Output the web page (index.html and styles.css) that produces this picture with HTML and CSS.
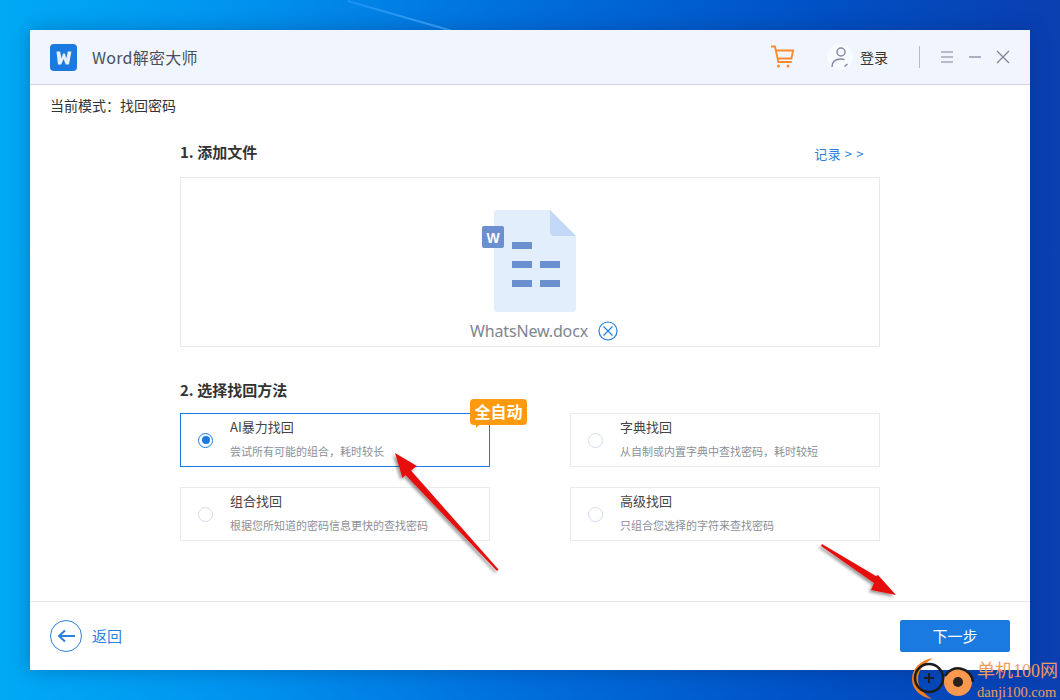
FILE: index.html
```html
<!DOCTYPE html>
<html lang="zh">
<head>
<meta charset="utf-8">
<title>Word解密大师</title>
<link rel="stylesheet" href="styles.css">
</head>
<body>
<div class="streak"></div>
<main class="window">
  <header class="titlebar">
    <svg class="logo" width="27" height="27" viewBox="0 0 27 27"><rect width="27" height="27" rx="4" fill="#1a7ae0"/><path d="M6.500 7.500h3.600l1.500 7 1.400-5h1.900l1.400 5 1.500-7h3.600L19 20.500h-3.300l-2.200-5.500-2.200 5.500H8z" fill="#e6f0fb"/></svg>
    <span class="appname">Word解密大师</span>
    <span class="spacer"></span>
    <svg class="cart" width="24" height="24" viewBox="0 0 24 24" fill="none" stroke="#ff8a2b" stroke-width="1.800"><path d="M1 1.500h4l3.300 15.500h13.500"/><path d="M5.800 5.500H23l-1.500 8H7.500"/><circle cx="8.500" cy="21" r="1.500" fill="#ff8a2b" stroke="none"/><circle cx="18" cy="21" r="1.500" fill="#ff8a2b" stroke="none"/></svg>
    <span class="avatar">
      <svg width="26" height="26" viewBox="0 0 26 26" fill="none" stroke="#858a9e" stroke-width="1.500"><circle cx="14" cy="8" r="4"/><path d="M5 23c0-5 3-8 9-8 1.500 0 2.500.2 3.500.6"/><path d="M17.500 22.500l3-2.500" /></svg>
    </span>
    <span class="login">登录</span>
    <span class="divider"></span>
    <svg class="winbtn first" width="14" height="14" viewBox="0 0 14 14" stroke="#7d8296" stroke-width="1.200"><path d="M1 2h12M1 7h12M1 12h12"/></svg>
    <svg class="winbtn" width="14" height="14" viewBox="0 0 14 14" stroke="#7d8296" stroke-width="1.200"><path d="M1 7h12"/></svg>
    <svg class="winbtn" width="14" height="14" viewBox="0 0 14 14" stroke="#7d8296" stroke-width="1.200"><path d="M1 1l12 12M13 1L1 13"/></svg>
  </header>

  <div class="mode">当前模式：找回密码</div>

  <section class="content">
    <div class="sec-head">
      <h2 class="sec-title">1. 添加文件</h2>
      <a class="record">记录 &gt; &gt;</a>
    </div>
    <div class="filebox">
      <svg class="docicon" width="98" height="104" viewBox="0 0 98 104">
        <path d="M14 5a3 3 0 0 1 3-3h53l26 26v73a3 3 0 0 1-3 3H17a3 3 0 0 1-3-3z" fill="#e2eefc"/>
        <path d="M70 2l26 26H74a4 4 0 0 1-4-4z" fill="#c3d8f6"/>
        <rect x="2" y="18" width="22" height="22" rx="2" fill="#6a90cf"/>
        <text class="docw" x="13" y="34.500" text-anchor="middle">W</text>
        <g fill="#6a90cf"><rect x="32" y="34" width="20" height="7"/><rect x="32" y="53" width="20" height="7"/><rect x="60" y="53" width="20" height="7"/><rect x="32" y="72" width="20" height="7"/><rect x="60" y="72" width="20" height="7"/></g>
      </svg>
      <div class="filename">
        <span>WhatsNew.docx</span>
        <svg width="20" height="20" viewBox="0 0 20 20" fill="none" stroke="#2b7fdc" stroke-width="1.200"><circle cx="10" cy="10" r="9"/><path d="M5.500 5.500l9 9M14.500 5.500l-9 9"/></svg>
      </div>
    </div>

    <h2 class="sec-title second">2. 选择找回方法</h2>
    <div class="methods">
      <div class="card active">
        <span class="radio on"></span>
        <div class="card-text"><div class="card-title">AI暴力找回</div><div class="card-desc">尝试所有可能的组合，耗时较长</div></div>
        <span class="badge">全自动</span>
      </div>
      <div class="card">
        <span class="radio"></span>
        <div class="card-text"><div class="card-title">字典找回</div><div class="card-desc">从自制或内置字典中查找密码，耗时较短</div></div>
      </div>
      <div class="card">
        <span class="radio"></span>
        <div class="card-text"><div class="card-title">组合找回</div><div class="card-desc">根据您所知道的密码信息更快的查找密码</div></div>
      </div>
      <div class="card">
        <span class="radio"></span>
        <div class="card-text"><div class="card-title">高级找回</div><div class="card-desc">只组合您选择的字符来查找密码</div></div>
      </div>
    </div>
  </section>

  <footer class="footer">
    <a class="back">
      <svg width="32" height="32" viewBox="0 0 32 32" fill="none" stroke="#2b7fdc"><circle cx="16" cy="16" r="15.500"/><path d="M25 16H10" stroke-width="2"/><path d="M15 10.500L9 16l6 5.500" stroke-width="2"/></svg>
      <span class="back-label">返回</span>
    </a>
    <button class="next">下一步</button>
  </footer>
</main>

<svg class="arrows" width="1060" height="700" viewBox="0 0 1060 700">
  <defs><filter id="sh" x="-20%" y="-20%" width="140%" height="140%"><feDropShadow dx="-2" dy="2" stdDeviation="1.500" flood-color="#000" flood-opacity=".4"/></filter></defs>
  <g fill="#e60f0f" filter="url(#sh)">
    <path d="M395 453l22 13-6 4.500 87.500 99-1.500 1.500-91.500-96-3 3z"/>
    <path d="M822 544l54 32 2-1 18 20-25-5 3-7-53-37z"/>
  </g>
</svg>

<div class="watermark">
  <svg class="wm-icon" width="65" height="43" viewBox="0 0 65 43">
    <path d="M21 1C8 3 0 12 0 22c0 10 8 18 20 20-8-5-14-11-14-20S12 7 21 1z" fill="#f57c1f"/>
    <circle cx="17" cy="21" r="14" fill="none" stroke="#1c1c1c" stroke-width="2.500"/>
    <path d="M12 21h10M17 16v10" stroke="#1c1c1c" stroke-width="1.800"/>
    <circle cx="46" cy="25" r="14" fill="#f9984f"/>
    <path d="M33 19a15 15 0 0 1 28 6" fill="none" stroke="#1c1c1c" stroke-width="2.500"/>
    <circle cx="46" cy="25" r="5" fill="#2a211c"/>
  </svg>
  <div class="wm-text"><div class="wm-cn">单机100网</div><div class="wm-en">danji100.com</div></div>
</div>
</body>
</html>
```
FILE: styles.css
```css
* { box-sizing: border-box; }
html, body { margin: 0; height: 700px; overflow: hidden; }
body {
  position: relative;
  padding: 30px;
  background: linear-gradient(90deg, #00a9f4 0%, #0096f0 20%, #0070dc 48%, #0050c4 78%, #0a3fb0 100%);
  font-family: "Noto Sans CJK SC", "Noto Sans", sans-serif;
  color: #333;
}
.streak {
  position: absolute; left: 348px; top: 0; width: 108px; height: 1.500px;
  background: linear-gradient(90deg, #1a8ff0, #3aa6fb); transform: rotate(16deg); transform-origin: left top;
}
.window {
  position: relative; width: 1000px; height: 640px; background: #fff;
  display: flex; flex-direction: column;
  box-shadow: 0 0 18px rgba(0, 30, 90, .3);
}
.titlebar {
  height: 55px; flex: none; display: flex; align-items: center;
  padding: 0 20px; background: #f1f6fe; border-bottom: 1px solid #d0d3dc;
}
.logo { flex: none; }
.appname { margin-left: 15px; font-size: 16px; letter-spacing: .25px; color: #4a4f5c; }
.spacer { flex: 1; }
.cart { margin-right: 33px; }
.avatar { width: 26px; height: 26px; display: block; margin-right: 7px; border-radius: 50%; background: #f7faff; }
.avatar svg { display: block; }
.login { font-size: 14px; color: #333; }
.divider { width: 1px; height: 22px; background: #b6bacb; margin: 0 20px 0 31px; }
.winbtn { margin-left: 14px; flex: none; }
.winbtn.first { margin-left: 0; }
.mode { height: 43px; flex: none; padding: 11px 20px 0; font-size: 14px; line-height: 18px; color: #333; }
.content { flex: 1; padding: 0 150px; }
.sec-head { display: flex; justify-content: space-between; align-items: center; height: 49px; padding: 0 16px 2px 0; }
.sec-title { margin: 0; font-size: 15px; font-weight: 700; line-height: 20px; color: #333; }
.record { margin-top: 4px; font-size: 13px; color: #2b7fdc; letter-spacing: .6px; }
.filebox {
  height: 170px; border: 1px solid #e6e8ec; display: flex; flex-direction: column;
  align-items: center; padding-top: 30px;
}
.docicon { display: block; margin-left: -3px; flex: none; }
.docw { font-family: "Liberation Sans", sans-serif; font-size: 14px; font-weight: 700; fill: #fff; }
.filename { display: flex; align-items: center; gap: 10px; margin: 9px 0 0 28px; font-family: "Noto Sans", sans-serif; font-size: 16px; letter-spacing: -.15px; line-height: 20px; color: #808590; }
.second { margin-top: 33px; }
.methods { display: grid; grid-template-columns: 310px 310px; column-gap: 80px; row-gap: 20px; margin-top: 13px; }
.card {
  position: relative; height: 54px; border: 1px solid #e8eaee;
  display: flex; align-items: center; padding-left: 17px;
}
.card.active { border-color: #1a7ae0; }
.radio { width: 15px; height: 15px; border: 1px solid #d3dcee; border-radius: 50%; flex: none; }
.radio.on { border-color: #1a7ae0; position: relative; }
.radio.on::after { content: ""; position: absolute; left: 2.500px; top: 2.500px; width: 8px; height: 8px; border-radius: 50%; background: #1a7ae0; }
.card-text { margin-left: 17px; align-self: flex-start; padding-top: 3px; }
.card-title { font-size: 13px; line-height: 20px; color: #444; }
.card-desc { margin-top: 6px; font-size: 11px; line-height: 16px; color: #8b8f98; }
.badge {
  position: absolute; right: -38px; top: -15px; width: 57px; height: 26px;
  background: #ff9a0e; border-radius: 4px; color: #fff; font-size: 16px; font-weight: 700;
  line-height: 25px; text-align: center;
}
.badge::after { content: ""; position: absolute; left: 6px; bottom: -3px; border: 3px solid transparent; border-top-color: #ff9a0e; border-left-color: #ff9a0e; }
.footer {
  height: 69px; flex: none; border-top: 1px solid #e6e6e8; display: flex;
  justify-content: space-between; align-items: center; padding: 0 20px;
}
.back { display: flex; align-items: center; gap: 10px; font-size: 15px; color: #2b7fdc; }
.back svg { display: block; }
.back-label { margin-top: -2px; }
.next { width: 110px; height: 32px; border: 0; border-radius: 2px; padding: 0 0 2px; background: #1a7ae0; color: #fff; font: 15px "Noto Sans CJK SC", sans-serif; }
.arrows { position: absolute; left: 0; top: 0; pointer-events: none; }
.watermark { position: absolute; left: 912px; top: 657px; display: flex; align-items: flex-start; }
.wm-icon { flex: none; display: block; }
.wm-text { margin: 4px 0 0 0; color: #f09a5e; line-height: 1; white-space: nowrap; }
.wm-cn { font-family: "Liberation Serif", "Noto Sans CJK SC", serif; font-size: 18px; line-height: 20px; }
.wm-en { font-family: "Liberation Serif", serif; font-size: 14.500px; line-height: 16px; margin-top: 3px; }
```
